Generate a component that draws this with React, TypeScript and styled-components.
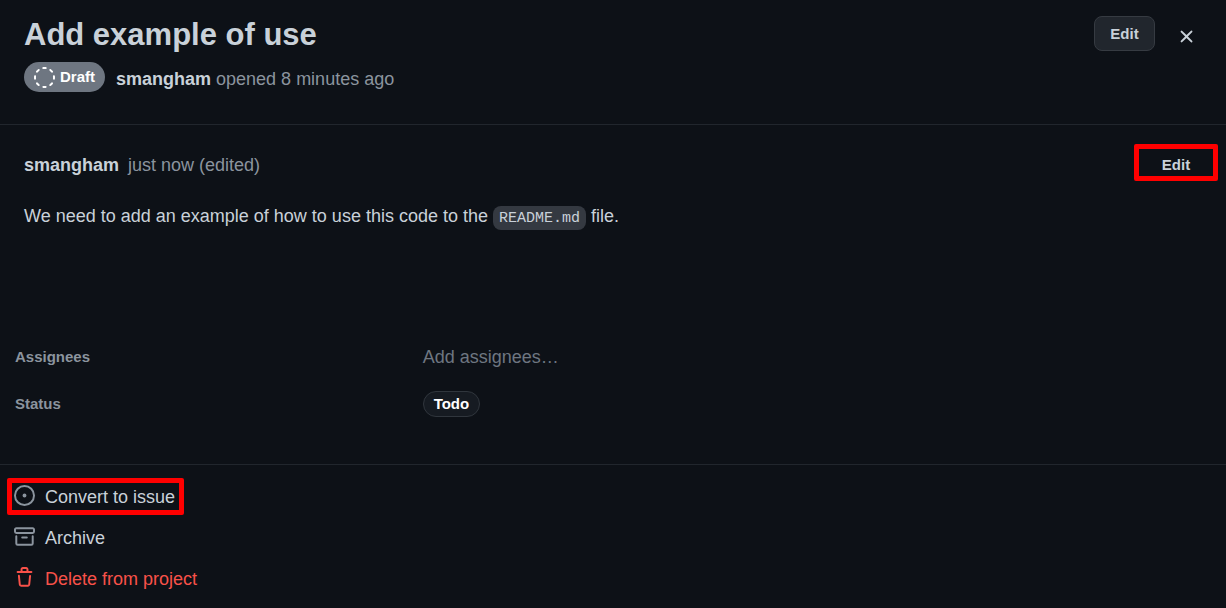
import React from 'react';
import styled, { createGlobalStyle } from 'styled-components';

const GlobalStyle = createGlobalStyle`
  *, *::before, *::after { box-sizing: border-box; }
  body {
    margin: 0;
    background: #0d1117;
    color: #c9d1d9;
    font-family: "Liberation Sans", Arial, sans-serif;
    font-size: 18px;
    line-height: 24px;
  }
  button { font: inherit; color: inherit; cursor: pointer; margin: 0; }
  p, h1, dl, dd, ul { margin: 0; padding: 0; }
`;

const Header = styled.header`
  display: flex;
  justify-content: space-between;
  align-items: flex-start;
  padding: 16px 24px 32px;
  border-bottom: 1px solid #21262d;
`;

const Title = styled.h1`
  font-size: 31px;
  line-height: 38px;
  font-weight: 700;
`;

const Meta = styled.div`
  display: flex;
  align-items: center;
  gap: 11px;
  margin-top: 8px;
`;

const DraftBadge = styled.span`
  display: inline-flex;
  align-items: center;
  gap: 5px;
  height: 30px;
  padding: 0 10px;
  border-radius: 15px;
  background: #6e7681;
  color: #fff;
  font-size: 15px;
  font-weight: 700;
`;

const Opened = styled.p`
  color: #8b949e;
  padding-top: 4px;
`;

const Author = styled.strong`
  color: #c9d1d9;
  font-weight: 700;
`;

const HeaderActions = styled.div`
  display: flex;
  align-items: flex-start;
  gap: 15px;
`;

const EditButton = styled.button`
  min-width: 61px;
  height: 35px;
  padding: 0 15px;
  border: 1px solid #363b42;
  border-radius: 8px;
  background: #21262d;
  font-size: 15px;
  font-weight: 700;
`;

const CloseButton = styled.button`
  display: flex;
  align-items: center;
  justify-content: center;
  width: 32px;
  height: 40px;
  padding: 0;
  border: 0;
  background: none;
`;

const Comment = styled.article`
  min-height: 208px;
  padding: 19px 8px 0 24px;
`;

const CommentHeader = styled.div`
  display: flex;
  align-items: center;
  justify-content: space-between;
`;

const Edited = styled.p`
  display: flex;
  gap: 9px;
  padding-top: 4px;
  color: #8b949e;
`;

const MarkedEditButton = styled.button`
  width: 84px;
  height: 37px;
  padding: 4px 0 0;
  border: 5px solid #f00;
  border-radius: 2px;
  background: none;
  font-size: 15px;
  font-weight: 700;
  line-height: 24px;
`;

const Body = styled.p`
  margin-top: 23px;
`;

const Code = styled.code`
  padding: 4px 6px 3px;
  border-radius: 8px;
  background: #343941;
  font-family: "Liberation Mono", monospace;
  font-size: 15px;
`;

const Fields = styled.dl`
  display: grid;
  grid-template-columns: 1fr 2fr;
  gap: 22px 6px;
  align-items: center;
  padding: 12px 0 47px 15px;
  border-bottom: 1px solid #21262d;
`;

const FieldName = styled.dt`
  color: #8b949e;
  font-size: 15px;
  font-weight: 700;
`;

const FieldValue = styled.dd`
  display: flex;
`;

const AssigneesButton = styled.button`
  padding: 0;
  border: 0;
  background: none;
  color: #6e7681;
`;

const StatusButton = styled.button`
  height: 26px;
  padding: 0 10px;
  border: 1px solid #30363d;
  border-radius: 13px;
  background: #161b22;
  color: #fff;
  font-size: 15px;
  font-weight: 700;
`;

const Actions = styled.ul`
  display: flex;
  flex-direction: column;
  align-items: flex-start;
  gap: 4px;
  padding: 13px 0 0 7px;
  list-style: none;
`;

const ActionButton = styled.button<{ $marked?: boolean; $danger?: boolean }>`
  display: flex;
  align-items: center;
  gap: 10px;
  height: 37px;
  padding: 0 4px 0 2px;
  border: 5px solid ${(p) => (p.$marked ? '#f00' : 'transparent')};
  border-radius: 2px;
  background: none;
  color: ${(p) => (p.$danger ? '#f85149' : '#c9d1d9')};
  svg {
    margin-bottom: 3px;
    color: ${(p) => (p.$danger ? '#f85149' : '#8b949e')};
  }
`;

type IconProps = { d: string };

const Icon = ({ d }: IconProps) => (
  <svg width="21" height="21" viewBox="0 0 16 16" fill="currentColor" aria-hidden="true">
    <path fillRule="evenodd" d={d} />
  </svg>
);

const closePath =
  'M3.72 3.72a.75.75 0 011.06 0L8 6.94l3.22-3.22a.75.75 0 111.06 1.06L9.06 8l3.22 3.22a.75.75 0 11-1.06 1.06L8 9.06l-3.22 3.22a.75.75 0 01-1.06-1.06L6.94 8 3.72 4.78a.75.75 0 010-1.06z';
const issuePath =
  'M8 9.5a1.5 1.5 0 100-3 1.5 1.5 0 000 3zM8 0a8 8 0 100 16A8 8 0 008 0zM1.5 8a6.5 6.5 0 1113 0 6.5 6.5 0 01-13 0z';
const archivePath =
  'M1.75 2.5a.25.25 0 00-.25.25v1.5c0 .138.112.25.25.25h12.5a.25.25 0 00.25-.25v-1.5a.25.25 0 00-.25-.25H1.75zM0 2.75C0 1.784.784 1 1.75 1h12.5c.966 0 1.75.784 1.75 1.75v1.5A1.75 1.75 0 0114.25 6H1.75A1.75 1.75 0 010 4.25v-1.5zM1.75 7a.75.75 0 01.75.75v5.5c0 .138.112.25.25.25h10.5a.25.25 0 00.25-.25v-5.5a.75.75 0 011.5 0v5.5A1.75 1.75 0 0113.25 15H2.75A1.75 1.75 0 011 13.25v-5.5A.75.75 0 011.75 7zm4.5 1a.75.75 0 000 1.5h3.5a.75.75 0 100-1.5h-3.5z';
const trashPath =
  'M6.5 1.75a.25.25 0 01.25-.25h2.5a.25.25 0 01.25.25V3h-3V1.75zm4.5 0V3h2.25a.75.75 0 010 1.5H2.75a.75.75 0 010-1.5H5V1.75C5 .784 5.784 0 6.75 0h2.5C10.216 0 11 .784 11 1.75zM4.496 6.675a.75.75 0 10-1.492.15l.66 6.6A1.75 1.75 0 005.405 15h5.19c.9 0 1.652-.681 1.741-1.576l.66-6.6a.75.75 0 00-1.492-.149l-.66 6.6a.25.25 0 01-.249.225h-5.19a.25.25 0 01-.249-.225l-.66-6.6z';

const DraftIcon = () => (
  <svg width="21" height="21" viewBox="0 0 21 21" aria-hidden="true">
    <circle cx="10.5" cy="10.5" r="9.5" fill="none" stroke="#fff" strokeWidth="2"
      strokeLinecap="round" pathLength="80" strokeDasharray="3.2 6.8" strokeDashoffset="1.6" />
  </svg>
);

export default function App() {
  return (
    <>
      <GlobalStyle />
      <main>
        <Header>
          <div>
            <Title>Add example of use</Title>
            <Meta>
              <DraftBadge><DraftIcon />Draft</DraftBadge>
              <Opened><Author>smangham</Author> opened 8 minutes ago</Opened>
            </Meta>
          </div>
          <HeaderActions>
            <EditButton type="button">Edit</EditButton>
            <CloseButton type="button" aria-label="Close"><Icon d={closePath} /></CloseButton>
          </HeaderActions>
        </Header>
        <Comment>
          <CommentHeader>
            <Edited><Author>smangham</Author><span>just now (edited)</span></Edited>
            <MarkedEditButton type="button">Edit</MarkedEditButton>
          </CommentHeader>
          <Body>
            We need to add an example of how to use this code to the <Code>README.md</Code> file.
          </Body>
        </Comment>
        <Fields>
          <FieldName>Assignees</FieldName>
          <FieldValue><AssigneesButton type="button">Add assignees…</AssigneesButton></FieldValue>
          <FieldName>Status</FieldName>
          <FieldValue><StatusButton type="button">Todo</StatusButton></FieldValue>
        </Fields>
        <Actions>
          <li><ActionButton type="button" $marked><Icon d={issuePath} />Convert to issue</ActionButton></li>
          <li><ActionButton type="button"><Icon d={archivePath} />Archive</ActionButton></li>
          <li><ActionButton type="button" $danger><Icon d={trashPath} />Delete from project</ActionButton></li>
        </Actions>
      </main>
    </>
  );
}
